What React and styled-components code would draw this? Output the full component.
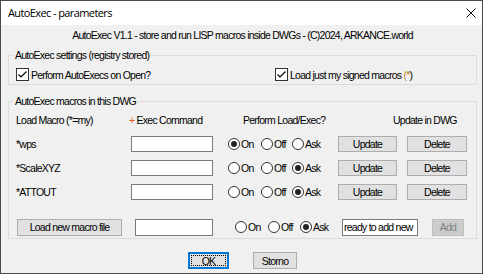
import React from 'react';
import styled, { createGlobalStyle } from 'styled-components';

const Global = createGlobalStyle`
  html, body { margin: 0; padding: 0; background: #ffffff; }
  body {
    font-family: "Liberation Sans", Arial, sans-serif;
    font-size: 10.5px;
    letter-spacing: -0.75px;
    color: #000;
  }
  * { box-sizing: border-box; }
`;

const Window = styled.div`
  width: 483px;
  height: 274px;
  border: 1px solid #4a4a4a;
  display: flex;
  flex-direction: column;
  background: #f0f0f0;
`;

const TitleBar = styled.div`
  height: 24px;
  flex: none;
  background: #ffffff;
  display: flex;
  align-items: center;
  justify-content: space-between;
  padding: 0 6px 0 7px;
`;

const TitleText = styled.span`
  font-family: "Open Sans", "Noto Sans", sans-serif;
  font-size: 11px;
  letter-spacing: -0.6px;
  line-height: 16px;
`;

const CloseIcon = styled.svg`
  width: 10px;
  height: 10px;
  display: block;
`;

const Body = styled.div`
  flex: 1;
  display: flex;
  flex-direction: column;
  padding: 0 5px 0 7px;
`;

const Header = styled.div`
  height: 20px;
  line-height: 20px;
  text-align: center;
  white-space: nowrap;
`;

const GroupBox = styled.fieldset`
  margin: ${(p) => p.$mt}px 0 0 0;
  padding: 0;
  border: 1px solid #dcdcdc;
  min-inline-size: auto;
`;

const Legend = styled.legend`
  margin-left: 5px;
  padding: 0 1px;
  line-height: 13px;
`;

const SettingsRow = styled.div`
  display: grid;
  grid-template-columns: 259px 1fr;
  padding: 6px 0 3px 7px;
  height: 22px;
  align-items: center;
`;

const CheckItem = styled.label`
  display: flex;
  align-items: center;
  gap: 2px;
  white-space: nowrap;
`;

const CheckBoxBox = styled.span`
  width: 13px;
  height: 13px;
  border: 1px solid #333;
  background: #fff;
  display: inline-flex;
  align-items: center;
  justify-content: center;
  flex: none;
`;

const Accent = styled.span`
  color: ${(p) => p.$c};
`;

const MacroGrid = styled.div`
  display: grid;
  grid-template-columns: 115px 97px 110px 69px 60px;
  grid-auto-rows: 24px;
  align-items: center;
  padding-left: 7px;
`;

const HeadCell = styled.div`
  white-space: nowrap;
  margin-left: ${(p) => p.$ml || 0}px;
  grid-column: ${(p) => p.$span || 'auto'};
`;

const Cell = styled.div`
  white-space: nowrap;
  display: flex;
  align-items: center;
`;

const TextBox = styled.input`
  width: ${(p) => p.$w}px;
  height: ${(p) => p.$h || 16}px;
  border: 1px solid #7a7a7a;
  background: #fff;
  padding: 0 1px;
  margin: 0;
  font-family: inherit;
  font-size: inherit;
  letter-spacing: inherit;
  color: #000;
  outline: none;
`;

const RadioGroup = styled.div`
  display: flex;
  align-items: center;
`;

const RadioItem = styled.label`
  display: flex;
  align-items: center;
  gap: 1px;
  width: ${(p) => p.$w}px;
  flex: none;
  white-space: nowrap;
`;

const RadioDot = styled.span`
  width: 12px;
  height: 12px;
  border: 1px solid #333;
  border-radius: 50%;
  background: #fff;
  display: inline-flex;
  align-items: center;
  justify-content: center;
  flex: none;
  &::after {
    content: '';
    width: 6px;
    height: 6px;
    border-radius: 50%;
    background: ${(p) => (p.$on ? '#222' : 'transparent')};
  }
`;

const Btn = styled.button`
  width: ${(p) => p.$w}px;
  height: ${(p) => p.$h || 16}px;
  padding: 0;
  margin: 0;
  font-family: inherit;
  font-size: inherit;
  letter-spacing: inherit;
  color: #000;
  background: #e1e1e1;
  border: 1px solid #adadad;
  white-space: nowrap;
  &:disabled {
    background: #cccccc;
    border-color: #bfbfbf;
    color: #838383;
  }
`;

const DefaultBtn = styled(Btn)`
  border: 1px solid #0078d7;
  box-shadow: inset 0 0 0 1px #0078d7;
  outline: 1px dotted #000;
  outline-offset: -4px;
`;

const AddRow = styled.div`
  display: flex;
  align-items: center;
  height: 22px;
  margin-top: 12px;
  padding-left: 8px;
`;

const Spacer = styled.div`
  width: ${(p) => p.$w}px;
  flex: none;
`;

const Footer = styled.div`
  display: flex;
  justify-content: center;
  gap: 24px;
  margin-top: 13px;
`;

function CheckBox({ label }) {
  return (
    <CheckItem>
      <CheckBoxBox>
        <svg width="11" height="11" viewBox="0 0 11 11">
          <polyline points="1.5,5.5 4,8 9.5,2.5" fill="none" stroke="#000" strokeWidth="1.2" />
        </svg>
      </CheckBoxBox>
      {label}
    </CheckItem>
  );
}

function Radios({ value, widths = [33, 31, 30] }) {
  const opts = ['On', 'Off', 'Ask'];
  return (
    <RadioGroup>
      {opts.map((o, i) => (
        <RadioItem key={o} $w={widths[i]}>
          <RadioDot $on={value === o} />
          {o}
        </RadioItem>
      ))}
    </RadioGroup>
  );
}

const macros = [
  { name: '*wps', mode: 'On' },
  { name: '*ScaleXYZ', mode: 'Ask' },
  { name: '*ATTOUT', mode: 'Ask' },
];

export default function App() {
  return (
    <>
      <Global />
      <Window>
        <TitleBar>
          <TitleText>AutoExec - parameters</TitleText>
          <CloseIcon viewBox="0 0 10 10">
            <path d="M0.5 0.5 L9.5 9.5 M9.5 0.5 L0.5 9.5" stroke="#000" strokeWidth="1" />
          </CloseIcon>
        </TitleBar>
        <Body>
          <Header>AutoExec V1.1 - store and run LISP macros inside DWGs - (C)2024, ARKANCE.world</Header>
          <GroupBox $mt={4}>
            <Legend>AutoExec settings (registry stored)</Legend>
            <SettingsRow>
              <CheckBox label="Perform AutoExecs on Open?" />
              <CheckBox
                label={
                  <span>
                    Load just my signed macros <Accent $c="#b98a1e">(*</Accent>)
                  </span>
                }
              />
            </SettingsRow>
          </GroupBox>
          <GroupBox $mt={10}>
            <Legend>AutoExec macros in this DWG</Legend>
            <MacroGrid>
              <HeadCell>Load Macro (*=my)</HeadCell>
              <HeadCell $ml={-2}>
                <Accent $c="#e0561b">+</Accent> Exec Command
              </HeadCell>
              <HeadCell $ml={15}>Perform Load/Exec?</HeadCell>
              <HeadCell $ml={55} $span="span 2">Update in DWG</HeadCell>
              {macros.map((m) => (
                <React.Fragment key={m.name}>
                  <Cell>{m.name}</Cell>
                  <Cell>
                    <TextBox $w={82} defaultValue="" />
                  </Cell>
                  <Cell>
                    <Radios value={m.mode} />
                  </Cell>
                  <Cell>
                    <Btn $w={59}>Update</Btn>
                  </Cell>
                  <Cell>
                    <Btn $w={60}>Delete</Btn>
                  </Cell>
                </React.Fragment>
              ))}
            </MacroGrid>
            <AddRow>
              <Btn $w={105} $h={17}>Load new macro file</Btn>
              <Spacer $w={13} />
              <TextBox $w={78} $h={17} defaultValue="" />
              <Spacer $w={22} />
              <Radios value="Ask" widths={[33, 32, 42]} />
              <TextBox $w={76} $h={17} defaultValue="ready to add new" />
              <Spacer $w={14} />
              <Btn $w={32} $h={17} disabled>Add</Btn>
            </AddRow>
          </GroupBox>
          <Footer>
            <DefaultBtn $w={41} $h={17}>OK</DefaultBtn>
            <Btn $w={44} $h={17}>Storno</Btn>
          </Footer>
        </Body>
      </Window>
    </>
  );
}
